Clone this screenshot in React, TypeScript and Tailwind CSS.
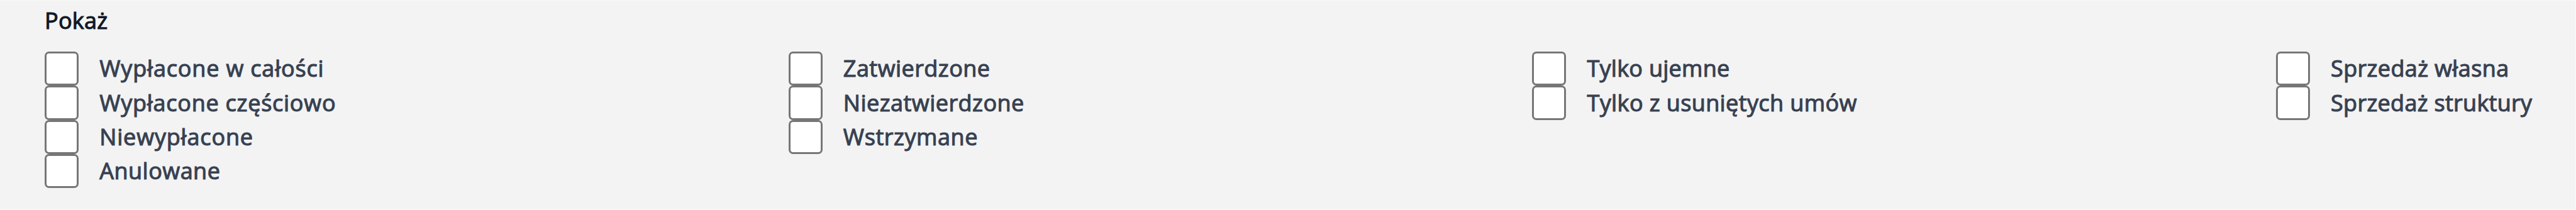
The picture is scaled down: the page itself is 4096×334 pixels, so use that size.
import React, { useState } from "react"

type Option = {
    label: string,
    spacing: string
}

const columns: Option[][] = [
    [
        { label: "Wypłacone w całości", spacing: "tracking-[0.82px]" },
        { label: "Wypłacone częściowo", spacing: "tracking-[0.74px]" },
        { label: "Niewypłacone", spacing: "tracking-[0.83px]" },
        { label: "Anulowane", spacing: "tracking-[0.47px]" },
    ],
    [
        { label: "Zatwierdzone", spacing: "tracking-[0.45px]" },
        { label: "Niezatwierdzone", spacing: "tracking-[0.47px]" },
        { label: "Wstrzymane", spacing: "tracking-[0.56px]" },
    ],
    [
        { label: "Tylko ujemne", spacing: "tracking-[0.26px]" },
        { label: "Tylko z usuniętych umów", spacing: "tracking-[0.39px]" },
    ],
    [
        { label: "Sprzedaż własna", spacing: "tracking-[0.36px]" },
        { label: "Sprzedaż struktury", spacing: "tracking-[0.29px]" },
    ],
]

const CheckOption = ({ label, spacing }: Option) => {

    const [checked, setChecked] = useState(false);

    return (
        <label className="flex h-[54.08px] items-center gap-[33.2px]">
            <input type="checkbox" checked={checked} onChange={() => setChecked(!checked)}
            className="size-[54.08px] shrink-0 appearance-none rounded-[7px] border-[3px] border-[#767676] bg-white
            checked:bg-blue-600"/>
            <span className={`whitespace-nowrap leading-[54px] text-[#374151] ${spacing}`}>
                {label}
            </span>
        </label>
    )
}

const App = () => {
  return (
    <fieldset className="h-[334px] w-full overflow-hidden border-y border-r border-[#fafafa] bg-[#f3f3f3]
    pl-[71px] pt-[5px] font-['Open_Sans',sans-serif] text-[36px] [-webkit-text-stroke-width:1.1px]">

        <h3 className="leading-[54px] tracking-[0.25px] text-[#111827]">Pokaż</h3>

        <div className="mt-[22.4px] grid grid-cols-[repeat(3,1182.6px)_1fr]">
            {columns.map((options, i) => (
                <div key={i} className="flex flex-col">
                    {options.map((option) => (
                        <CheckOption key={option.label} {...option}/>
                    ))}
                </div>
            ))}
        </div>

    </fieldset>
  )
}

export default App
